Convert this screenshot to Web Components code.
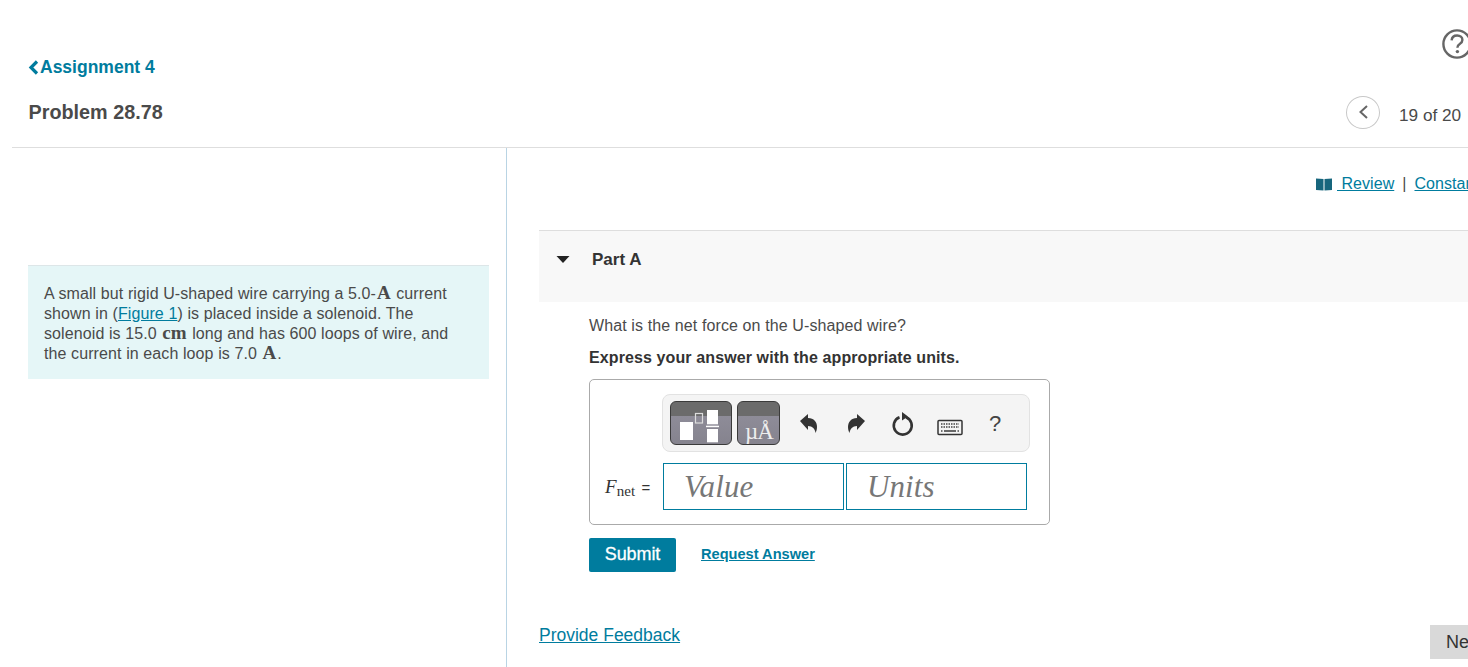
<!DOCTYPE html>
<html>
<head>
<meta charset="utf-8">
<title>Problem 28.78</title>
<style>
    html, body {
        margin: 0;
        height: 667px;
        overflow: hidden;
        background: #fff;
        font-family: "Liberation Sans", Arial, sans-serif;
    }
</style>
</head>
<body>
<mp-page></mp-page>

<script>
const LINK = "#007c9e";

class TopBar extends HTMLElement {
    constructor() {
        super();
        this.attachShadow({ mode: "open" }).innerHTML = /*html*/`
        <style>
            :host { display: block; margin-left: 12px; height: 148px; box-sizing: border-box; border-bottom: 1px solid #dedede; padding-left: 16px; width: 1500px; }
            .help { height: 30.5px; padding-top: 26.5px; width: 1468px; margin-left: -28px; display: flex; justify-content: flex-end; }
            .help svg { margin-right: -8.3px; flex: none; }
            .back { display: flex; align-items: center; height: 20px; color: ${LINK}; font-weight: bold; font-size: 17.5px; width: max-content; }
            .back svg { margin-right: 1px; }
            .row { display: flex; align-items: center; width: 1434px; height: 36px; margin-top: 17px; }
            h1 { margin: 0; padding-left: .5px; font-size: 19.8px; font-weight: bold; color: #4a4a4a; flex: 1; }
            .prev { width: 34px; height: 33px; box-sizing: border-box; border: 1px solid #c8c8c8; border-radius: 50%; display: flex; align-items: center; justify-content: center; }
            .count { font-size: 17.2px; color: #4a4a4a; margin-left: 19px; width: 63px; white-space: nowrap; padding-top: 7px; }
        </style>
        <div class="help">
            <svg width="38" height="34" viewBox="0 0 38 34">
                <circle cx="19" cy="17" r="13.6" fill="none" stroke="#666" stroke-width="2.4"/>
                <path d="M13.6 13.4c.3-3.2 2.500-4.900 5.500-4.900 3.100 0 5.300 1.800 5.300 4.400 0 2-1 3-2.700 4.100-1.600 1-2.300 1.800-2.300 3.700" fill="none" stroke="#666" stroke-width="2.400"/>
                <circle cx="19.4" cy="24.6" r="1.7" fill="#666"/>
            </svg>
        </div>
        <a class="back">
            <svg width="11" height="15" viewBox="0 0 11 15"><path d="M9 1.500 3 7.500l6 6" fill="none" stroke="${LINK}" stroke-width="3.200"/></svg>
            Assignment 4
        </a>
        <div class="row">
            <h1>Problem 28.78</h1>
            <div class="prev">
                <svg width="11" height="16" viewBox="0 0 11 16"><path d="M9 2 2.500 8 9 14" fill="none" stroke="#666" stroke-width="2"/></svg>
            </div>
            <div class="count">19 of 20</div>
        </div>`;
    }
}

// roman units and symbols in the text, like the MathJax output
class MathText extends HTMLElement {
    constructor() {
        super();
        // no whitespace in here, it would show up as a space in the sentence
        this.attachShadow({ mode: "open" }).innerHTML = `<style>:host { display: inline; padding: 0 1px; font-family: "Liberation Serif", serif; font-weight: bold; font-size: 19px; line-height: 0; letter-spacing: 0; }</style><slot></slot>`;
    }
}

class Intro extends HTMLElement {
    constructor() {
        super();
        this.attachShadow({ mode: "open" }).innerHTML = /*html*/`
        <style>
            :host { display: block; margin: 117px 17px 0 28px; box-sizing: border-box; height: 114px; background: #e5f6f7; border-top: 1px solid #dde6e8; padding: 18px 37px 0 16px; font-size: 16px; line-height: 20px; color: #4a4a4a; letter-spacing: .1px; }
        </style>
        <slot></slot>`;
    }
}

class PartHeader extends HTMLElement {
    constructor() {
        super();
        this.attachShadow({ mode: "open" }).innerHTML = /*html*/`
        <style>
            :host { display: flex; height: 72px; box-sizing: border-box; border-top: 1px solid #dedede; background: #f8f8f8; padding: 19px 0 0 17px; font-size: 17px; font-weight: bold; color: #333; }
            svg { margin-top: 6px; margin-right: 22px; }
        </style>
        <svg width="14" height="7" viewBox="0 0 14 7"><path d="M.5 0h13L7 7z" fill="#222"/></svg>
        <slot></slot>`;
    }
}

class MathToolbar extends HTMLElement {
    constructor() {
        super();
        this.attachShadow({ mode: "open" }).innerHTML = /*html*/`
        <style>
            :host { display: flex; align-items: center; width: 368px; height: 58px; box-sizing: border-box; background: #f4f4f4; border: 1px solid #e2e2e2; border-radius: 8px; padding-left: 7px; }
            .tile { position: relative; height: 44px; box-sizing: border-box; border: 1px solid #3a3a3a; border-radius: 6px; background: linear-gradient(#6b6b6b 0 14px, #8e8c98 14px, #85838e 100%); overflow: hidden; margin-right: 5px; }
            .a { width: 62px; }
            .b { width: 43px; }
            .a svg { display: block; }
            .mu { position: absolute; left: 7px; bottom: -3px; font-family: "Liberation Serif", serif; font-size: 23px; letter-spacing: -1px; color: #eee; white-space: nowrap; line-height: 30px; }
            .tools { display: flex; align-items: center; }
            .tools > * { flex: none; }
            .q { font-size: 22px; color: #444; margin: 2px 0 0 26px; }
        </style>
        <div class="tile a">
            <svg width="60" height="42" viewBox="0 0 60 42">
                <rect x="9" y="20" width="13" height="18" fill="#fff"/>
                <rect x="24.500" y="11.500" width="7" height="9.500" fill="none" stroke="#ddd" stroke-width="1.200"/>
                <rect x="36" y="8" width="11" height="14.300" fill="#fff"/>
                <rect x="35" y="23.700" width="13" height="1.500" fill="#fff"/>
                <rect x="36" y="27" width="11" height="13.300" fill="#fff"/>
            </svg>
        </div>
        <div class="tile b"><span class="mu">µÅ</span></div>
        <div class="tools">
            <svg style="margin-left:14px;margin-top:1px" width="20" height="22" viewBox="0 0 20 22"><path d="M1 8 9 1v4c6 0 9 4 9 9 0 3-1 5-1.500 6-.5-4-3-7-7.500-7v4z" fill="#333"/></svg>
            <svg style="margin-left:27px;margin-top:1px" width="20" height="22" viewBox="0 0 20 22"><path d="M19 8 11 1v4C5 5 2 9 2 14c0 3 1 5 1.500 6 .5-4 3-7 7.500-7v4z" fill="#333"/></svg>
            <svg style="margin-left:25px;margin-top:2px" width="24" height="26" viewBox="0 0 24 26"><path d="M8.500 6.200a9 9 0 1 0 6.500 0" fill="none" stroke="#333" stroke-width="2.600"/><path d="M11 1 17 5.500 11 9.500z" fill="#333"/></svg>
            <svg style="margin-left:22px;margin-top:9px" width="26" height="18" viewBox="0 0 26 18">
                <rect x="1" y="1.500" width="24" height="14" rx="1" fill="#f4f4f4" stroke="#333" stroke-width="1.500"/>
                <path d="M4 5h18M4 8h18" stroke="#444" stroke-width="1.500" stroke-dasharray="1.500 1"/>
                <path d="M7 12h12" stroke="#444" stroke-width="1.600"/>
                <path d="M4 12h1.500M20.500 12H22" stroke="#444" stroke-width="1.500"/>
            </svg>
            <span class="q">?</span>
        </div>`;
    }
}

class AnswerBox extends HTMLElement {
    constructor() {
        super();
        this.attachShadow({ mode: "open" }).innerHTML = /*html*/`
        <style>
            :host { display: block; width: 461px; height: 146px; box-sizing: border-box; border: 1px solid #aaa; border-radius: 5px; margin-top: 11px; padding: 14px 0 0 72px; }
            .row { display: flex; align-items: center; margin: 11px 0 0 -57px; height: 47px; }
            .label { width: 58px; font-family: "Liberation Serif", serif; font-size: 19px; color: #333; white-space: nowrap; }
            .label i { font-style: italic; }
            .label sub { font-size: 15px; vertical-align: -3px; line-height: 0; }
            .label small { font-family: "Liberation Sans", sans-serif; font-size: 15px; margin-left: 6px; }
            .input { width: 181px; height: 47px; box-sizing: border-box; border: 1px solid ${LINK}; margin-right: 2px; padding-left: 20px; font: italic 31px/45px "Liberation Serif", serif; color: #777; }
        </style>
        <mp-toolbar></mp-toolbar>
        <div class="row">
            <div class="label"><i>F</i><sub>net</sub><small>=</small></div>
            <div class="input">Value</div>
            <div class="input">Units</div>
        </div>`;
    }
}

class Question extends HTMLElement {
    constructor() {
        super();
        this.attachShadow({ mode: "open" }).innerHTML = /*html*/`
        <style>
            :host { display: block; padding-left: 50px; color: #333; font-size: 16px; letter-spacing: .11px; }
            p { margin: 0; line-height: 20px; }
            .q { margin-top: 14px; color: #4a4a4a; }
            .hint { margin-top: 12px; font-weight: bold; }
            .actions { display: flex; align-items: center; margin-top: 13px; letter-spacing: 0; }
            button { width: 87px; height: 34px; border: none; border-radius: 2px; background: ${LINK}; color: #fff; font: 18px "Liberation Sans", sans-serif; -webkit-text-stroke: .3px #fff; letter-spacing: -.1px; padding: 0 0 2px; }
            a { margin: 0 0 3px 25px; color: ${LINK}; font-size: 14.600px; font-weight: bold; text-decoration: underline; }
        </style>
        <p class="q">What is the net force on the U-shaped wire?</p>
        <p class="hint">Express your answer with the appropriate units.</p>
        <mp-answer></mp-answer>
        <div class="actions">
            <button>Submit</button>
            <a>Request Answer</a>
        </div>`;
    }
}

class Page extends HTMLElement {
    constructor() {
        super();
        this.attachShadow({ mode: "open" }).innerHTML = /*html*/`
        <style>
            :host { display: block; width: 1468px; height: 667px; overflow: hidden; }
            .cols { display: grid; grid-template-columns: 507px 961px; height: 519px; }
            .left { border-right: 1px solid #b9d4e4; }
            .right { padding-left: 32px; overflow: hidden; }
            .links { height: 82px; box-sizing: border-box; padding-top: 26px; display: flex; justify-content: flex-end; white-space: nowrap; font-size: 16px; letter-spacing: .05px; color: #4a4a4a; width: 929px; }
            .links > div { width: 152px; flex: none; display: flex; align-items: center; height: 20px; }
            .links svg { flex: none; margin-right: 5px; }
            a { color: ${LINK}; text-decoration: underline; }
            .sep { margin: 0 8px; }
            .bottom { display: flex; justify-content: space-between; margin-top: 53px; width: 929px; }
            .bottom a { font-size: 17.500px; }
            .next { width: 60px; height: 34px; background: #d9d9d9; flex: none; font-size: 18px; color: #333; line-height: 34px; padding-left: 16px; box-sizing: border-box; margin-right: -22px; overflow: hidden; }
        </style>
        <mp-topbar></mp-topbar>
        <div class="cols">
            <div class="left">
                <mp-intro>A small but rigid U-shaped wire carrying a 5.0-<mp-math>A</mp-math> current shown in (<a>Figure 1</a>) is placed inside a solenoid. The solenoid is 15.0 <mp-math>cm</mp-math> long and has 600 loops of wire, and the current in each loop is 7.0 <mp-math>A</mp-math>.</mp-intro>
            </div>
            <div class="right">
                <div class="links">
                    <div>
                        <svg width="16" height="13" viewBox="0 0 16 13"><path d="M0 .5l7.500.5v11.500L0 12zM16 .5 8.500 1v11.500L16 12z" fill="#17667d"/></svg>
                        <a>&nbsp;Review</a><span class="sep">|</span><a>Constants</a>
                    </div>
                </div>
                <mp-part-header>Part A</mp-part-header>
                <mp-question></mp-question>
                <div class="bottom">
                    <a>Provide Feedback</a>
                    <div class="next">Next</div>
                </div>
            </div>
        </div>`;
    }
}

customElements.define("mp-topbar", TopBar);
customElements.define("mp-math", MathText);
customElements.define("mp-intro", Intro);
customElements.define("mp-part-header", PartHeader);
customElements.define("mp-toolbar", MathToolbar);
customElements.define("mp-answer", AnswerBox);
customElements.define("mp-question", Question);
customElements.define("mp-page", Page);
</script>
</body>
</html>
